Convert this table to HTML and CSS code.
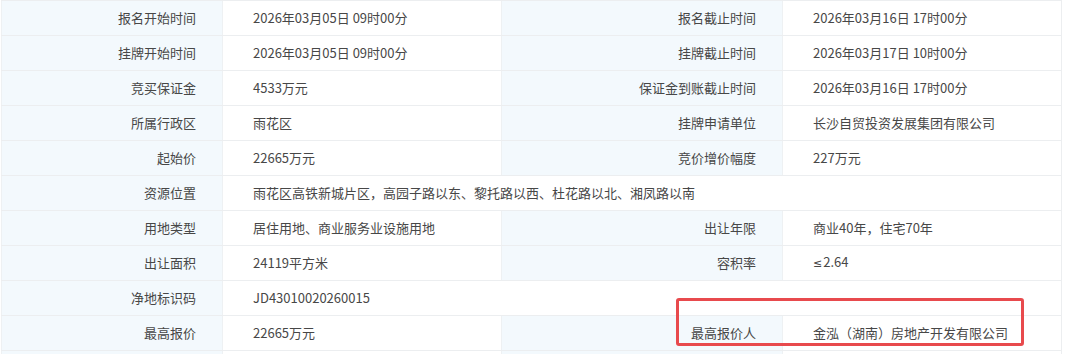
FILE: index.html
```html
<!DOCTYPE html>
<html lang="zh-CN">
<head>
<meta charset="utf-8">
<title>挂牌信息</title>
<link rel="stylesheet" href="styles.css">
</head>
<body>
<div class="wrap">
  <table class="info">
    <colgroup>
      <col class="c1"><col class="c2"><col class="c3"><col class="c4">
    </colgroup>
    <tbody>
      <tr><td class="lab">报名开始时间</td><td class="val">2026年03月05日 09时00分</td><td class="lab">报名截止时间</td><td class="val">2026年03月16日 17时00分</td></tr>
      <tr><td class="lab">挂牌开始时间</td><td class="val">2026年03月05日 09时00分</td><td class="lab">挂牌截止时间</td><td class="val">2026年03月17日 10时00分</td></tr>
      <tr><td class="lab">竞买保证金</td><td class="val">4533万元</td><td class="lab">保证金到账截止时间</td><td class="val">2026年03月16日 17时00分</td></tr>
      <tr><td class="lab">所属行政区</td><td class="val">雨花区</td><td class="lab">挂牌申请单位</td><td class="val">长沙自贸投资发展集团有限公司</td></tr>
      <tr><td class="lab">起始价</td><td class="val">22665万元</td><td class="lab">竞价增价幅度</td><td class="val">227万元</td></tr>
      <tr><td class="lab">资源位置</td><td class="val" colspan="3">雨花区高铁新城片区，高园子路以东、黎托路以西、杜花路以北、湘凤路以南</td></tr>
      <tr><td class="lab">用地类型</td><td class="val">居住用地、商业服务业设施用地</td><td class="lab">出让年限</td><td class="val">商业40年，住宅70年</td></tr>
      <tr><td class="lab">出让面积</td><td class="val">24119平方米</td><td class="lab">容积率</td><td class="val"><span class="sym">≤</span>2.64</td></tr>
      <tr><td class="lab">净地标识码</td><td class="val" colspan="3">JD43010020260015</td></tr>
      <tr><td class="lab">最高报价</td><td class="val">22665万元</td><td class="lab">最高报价人</td><td class="val">金泓（湖南）房地产开发有限公司</td></tr>
      <tr class="tail"><td class="lab"></td><td class="val"></td><td class="lab"></td><td class="val"></td></tr>
    </tbody>
  </table>
  <div class="mark"></div>
</div>
</body>
</html>
```
FILE: styles.css
```css
html, body {
  margin: 0;
  padding: 0;
  background: #ffffff;
}
body {
  font-family: "Noto Sans CJK SC", "Noto Sans", sans-serif;
  font-size: 13px;
  color: #474747;
  height: 354px;
  overflow: hidden;
}
.wrap {
  position: relative;
  width: 1062px;
  padding-left: 1px;
}
.info {
  border-collapse: collapse;
  table-layout: fixed;
  width: 1060px;
  border: 1px solid #eceef0;
}
.c1 { width: 221px; }
.c2 { width: 279px; }
.c3 { width: 281px; }
.c4 { width: 279px; }
.info td {
  height: 34px;
  padding: 0;
  border-top: 1px solid #eceef0;
  border-bottom: 1px solid #eceef0;
  border-left: 1px solid #eef1f3;
  white-space: nowrap;
  line-height: 20px;
  vertical-align: middle;
}
.info .tail td {
  height: 3px;
}
.lab {
  background: #f3f9fd;
  text-align: right;
  padding-right: 26px !important;
}
.val {
  background: #ffffff;
  text-align: left;
  padding-left: 30px !important;
}
.sym {
  font-family: "DejaVu Sans", sans-serif;
  font-size: 11px;
  margin-right: 1px;
}
.mark {
  position: absolute;
  left: 676px;
  top: 298px;
  width: 342px;
  height: 42px;
  border: 3px solid #e84a4d;
  border-radius: 3px;
}
```
